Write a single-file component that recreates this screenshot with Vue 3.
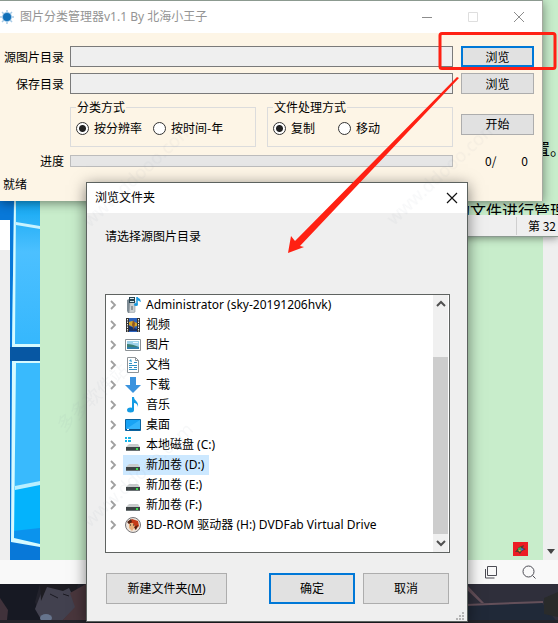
<script setup>
import { ref } from 'vue'

const source = ref('')
const target = ref('')
const sortMode = ref('resolution')
const fileMode = ref('copy')
const selected = ref('d')

const nodes = [
  { id: 'admin', icon: 'user', label: 'Administrator (sky-20191206hvk)' },
  { id: 'video', icon: 'video', label: '视频' },
  { id: 'picture', icon: 'picture', label: '图片' },
  { id: 'doc', icon: 'doc', label: '文档' },
  { id: 'download', icon: 'download', label: '下载' },
  { id: 'music', icon: 'music', label: '音乐' },
  { id: 'desktop', icon: 'desktop', label: '桌面' },
  { id: 'c', icon: 'system', label: '本地磁盘 (C:)' },
  { id: 'd', icon: 'disk', label: '新加卷 (D:)' },
  { id: 'e', icon: 'disk', label: '新加卷 (E:)' },
  { id: 'f', icon: 'disk', label: '新加卷 (F:)' },
  { id: 'h', icon: 'bd', label: 'BD-ROM 驱动器 (H:) DVDFab Virtual Drive' }
]
</script>

<template>
  <div class="screen">
    <svg class="night" viewBox="0 0 558 39" preserveAspectRatio="none" aria-hidden="true">
      <rect width="558" height="39" fill="#22222c" />
      <path d="M0 0h40l-5 18 7 19H0z" fill="#171923" />
      <path d="M44 2l18-2 18 8-2 14-16 15H42l-7-12z" fill="#42414f" />
      <path d="M40 0h38l-4 14-5-10-6 3-16-4-6 14z" fill="#1d1c22" />
      <path d="M70 9l16-9v39H60l15-16z" fill="#49363c" />
      <path d="M50 10l8 4M63 10l6 2" stroke="#1b1a22" stroke-width="1" />
      <ellipse cx="46" cy="34" rx="6" ry="4" fill="#66748d" />
      <path d="M0 14l8 12-1 10H0z" fill="#40323b" />
      <rect x="466" width="92" height="39" fill="#2f2f3b" />
      <path d="M466 21l76-2 16 20h-92z" fill="#202938" />
      <path d="M466 20l77-3v2l-77 3zM467 1l17 18h-3L466 5z" fill="#64505a" />
      <path d="M544 14l14-6v25l-14-3z" fill="#292b2b" />
      <rect y="36" width="558" height="3" fill="#24242a" />
    </svg>

    <div class="browser">
      <div class="page">
        <div class="preview"><i></i></div>
        <svg class="wallpaper" viewBox="0 0 30 359" preserveAspectRatio="none" aria-hidden="true">
          <defs>
            <linearGradient id="pane" x1="0" y1="0" x2="0" y2="1">
              <stop offset="0" stop-color="#13a8f2" />
              <stop offset=".35" stop-color="#4cc0ff" />
              <stop offset="1" stop-color="#35b7fd" />
            </linearGradient>
          </defs>
          <rect width="30" height="359" fill="#0878d8" />
          <path d="M4 0h26v146H2z" fill="url(#pane)" />
          <path d="M4 0h2l-1 143h25v3H2z" fill="#d6faff" />
          <path d="M6 21l24 4v3L6 24z" fill="#c9f3ff" />
          <rect y="146" width="30" height="14" fill="#0757a3" />
          <path d="M2 160h28v183L2 340z" fill="#39bafd" />
          <path d="M4 286l26-6v61L3 338z" fill="#04b3fc" />
          <path d="M3 330l27-3v17L3 339z" fill="#0b93ed" />
          <path d="M2 160h28v2H6l-2 175 26 6v3L1 341z" fill="#d6faff" />
          <path d="M5 285l25-5v4L5 289z" fill="#b9efff" />
        </svg>
        <div class="paper">
          <svg class="flag" viewBox="0 0 15 14" aria-hidden="true">
            <rect width="15" height="14" fill="#ed1c24" />
            <path d="M2 10l4-5 5-2-1 3 3 1-4 2-2 3-2-2z" fill="#5d3b2c" />
            <path d="M5 6l3-1v3H5z" fill="#3aa757" /><path d="M8 6l3 1-3 2z" fill="#3d73d8" /><path d="M5 8l3 0-1 2z" fill="#e8b729" />
          </svg>
        </div>
        <div class="gutter"><i></i></div>
      </div>
      <div class="toolbar">
        <svg width="14" height="14" viewBox="0 0 14 14" fill="none" stroke="#4d4d55" aria-hidden="true"><path d="M3.500 1.500h9v9h-9zM1.500 4v9h9" /></svg>
        <svg width="14" height="14" viewBox="0 0 14 14" fill="none" stroke="#4d4d55" aria-hidden="true"><circle cx="6.500" cy="6.500" r="5.500" /><path d="M10.500 10.500l3 3" /></svg>
      </div>
    </div>

    <div class="editor">
      <p class="line far">置。</p>
      <p class="line near">的文件进行管理</p>
      <div class="status"><span>第 32</span></div>
    </div>

    <main class="window">
      <header class="titlebar">
        <svg class="logo" width="14" height="16" viewBox="0 0 14 16" aria-hidden="true">
          <path d="M7 1v14M0 8h14M2 3l10 10M12 3L2 13" stroke="#a9cbe6" stroke-width="1.500" />
          <circle cx="7" cy="8" r="5" fill="#9cc5e6" /><circle cx="7" cy="8" r="4" fill="#0f6fb8" />
        </svg>
        <h1>图片分类管理器v1.1 By 北海小王子</h1>
        <div class="controls">
          <button type="button" aria-label="最小化"><svg width="12" height="12" viewBox="0 0 12 12"><path d="M1 6.500h10" stroke="#8c8c8c" /></svg></button>
          <button type="button" aria-label="最大化" disabled><svg width="12" height="12" viewBox="0 0 12 12"><path d="M1.500 1.500h9v9h-9z" fill="none" stroke="#dedede" /></svg></button>
          <button type="button" aria-label="关闭"><svg width="12" height="12" viewBox="0 0 12 12"><path d="M1 1l10 10M11 1L1 11" stroke="#8c8c8c" /></svg></button>
        </div>
      </header>

      <form class="form" @submit.prevent>
        <label for="source">源图片目录</label>
        <input id="source" v-model="source" class="field" type="text" />
        <button type="button" class="btn primary">浏览</button>

        <label for="target">保存目录</label>
        <input id="target" v-model="target" class="field" type="text" />
        <button type="button" class="btn">浏览</button>

        <div class="groups">
          <fieldset>
            <legend>分类方式</legend>
            <label class="radio"><input v-model="sortMode" type="radio" name="sort" value="resolution" />按分辨率</label>
            <label class="radio"><input v-model="sortMode" type="radio" name="sort" value="year" />按时间-年</label>
          </fieldset>
          <fieldset class="loose">
            <legend>文件处理方式</legend>
            <label class="radio"><input v-model="fileMode" type="radio" name="file" value="copy" />复制</label>
            <label class="radio"><input v-model="fileMode" type="radio" name="file" value="move" />移动</label>
          </fieldset>
        </div>
        <button type="submit" class="btn start">开始</button>

        <label class="tail" for="progress">进度</label>
        <progress id="progress" class="tail" value="0" max="100"></progress>
        <div class="count tail"><span>0/</span><span>0</span></div>
      </form>
      <footer>就绪</footer>
    </main>

    <section class="dialog" role="dialog" aria-labelledby="dialog-title">
      <header class="dialog-title">
        <h2 id="dialog-title">浏览文件夹</h2>
        <button type="button" aria-label="关闭"><svg width="12" height="12" viewBox="0 0 12 12"><path d="M1 1l10 10M11 1L1 11" stroke="#111" stroke-width="1.200" /></svg></button>
      </header>
      <div class="dialog-body">
        <p>请选择源图片目录</p>
        <div class="tree">
          <ul>
            <li v-for="n in nodes" :key="n.id">
              <button type="button" class="toggle" :aria-label="n.label">
                <svg width="8" height="10" viewBox="0 0 8 10"><path d="M2 1l4 4-4 4" fill="none" stroke="#a0a0a0" stroke-width="1.800" /></svg>
              </button>
              <button type="button" class="node" :class="{ on: n.id === selected }" @click="selected = n.id">
                <svg width="16" height="16" viewBox="0 0 16 16" aria-hidden="true">
                  <g v-if="n.icon === 'user'">
                    <path d="M2 3l4-2v15H3L2 14z" fill="#7e8b94" /><path d="M5 4h5v11l-2 1H4z" fill="#c9ced1" stroke="#8b949a" stroke-width=".6" />
                    <path d="M4 0h6v6H4z" fill="#27414e" /><path d="M5 1h4v1H5zM5 4h4v1H5z" fill="#d6e7ec" />
                    <path d="M12 0v7" stroke="#1697dc" stroke-width="1.500" /><path d="M12 0l3 2 1 3-4-2z" fill="#1697dc" /><ellipse cx="11" cy="7.500" rx="2" ry="1.500" fill="#1697dc" />
                    <path d="M7 9v4" stroke="#596167" />
                  </g>
                  <g v-else-if="n.icon === 'video'">
                    <path d="M1 1h14v14H1z" fill="#333" /><path d="M4 1h8v14H4z" fill="#2b62bd" />
                    <path d="M4 5l3-1 5 2v3l-4 1-4-2z" fill="#d7a529" /><path d="M4 9l8 3v2H4z" fill="#172f67" /><path d="M8 3l2 3-1 7-2-5z" fill="#8f5622" />
                    <path d="M2.500 2v13M13.500 2v13" stroke="#eee" stroke-dasharray="1.500 1" />
                  </g>
                  <g v-else-if="n.icon === 'picture'">
                    <path d="M.5 2.500h15v11H.5z" fill="#fff" stroke="#8b9195" /><path d="M2 4h12v8H2z" fill="#9ed1ea" />
                    <path d="M2 7c4 0 7 1 12 3v2H2z" fill="#3b7f76" /><path d="M2 10h12v2H2z" fill="#2f7eab" /><path d="M8 5h5v1H8z" fill="#e9f7fc" />
                  </g>
                  <g v-else-if="n.icon === 'doc'">
                    <path d="M2.500.5h8l3 3v12h-11z" fill="#fff" stroke="#8e9498" /><path d="M10.500.5v3h3" fill="none" stroke="#8e9498" />
                    <path d="M4 6.500h3M9 5.500h3M4 8.500h8M4 10.500h3M9 10.500h3M4 12.500h8" stroke="#2f90c4" /><path d="M4 4l2-2 1 3z" fill="#37a0d4" />
                  </g>
                  <path v-else-if="n.icon === 'download'" d="M5 0h6v8h5l-8 8-8-8h5z" fill="#3b93de" />
                  <g v-else-if="n.icon === 'music'" fill="#139be4">
                    <path d="M7 0h2c0 4 5 4 4 10-.5-3-2-4-4-4v7H7z" /><ellipse cx="5.500" cy="13" rx="3.500" ry="2.500" />
                  </g>
                  <g v-else-if="n.icon === 'desktop'">
                    <path d="M.5 2.500h15v11H.5z" fill="#18a2f4" stroke="#0b639e" /><path d="M1 12l14-9v10H1z" fill="#35b4fb" /><path d="M1 12h14v1H1z" fill="#0a4e86" /><path d="M2 12h2v1H2z" fill="#fff" />
                  </g>
                  <g v-else-if="n.icon === 'bd'">
                    <circle cx="8" cy="8" r="7.500" fill="#eee5dc" stroke="#77777b" /><path d="M3 5l4-3 6 2 1 5-4 4-1-5-4 1z" fill="#c43b18" />
                    <path d="M4 6l4 0 2 4-3 4-3-3z" fill="#e8b07c" /><path d="M2 5l4-3 1 3-3 2zM9 10l4-2-2 5z" fill="#512314" /><path d="M5 8h1M8 8h1" stroke="#222" />
                  </g>
                  <g v-else>
                    <g v-if="n.icon === 'system'" fill="#16b4e8"><path d="M0 0h2v2H0zM3 0h3v2H3zM0 3h2v2H0zM3 3h3v2H3z" /></g>
                    <path d="M4 7h9l2 3H1z" fill="#c9cccd" /><path d="M1 10h14v4H1z" fill="#3d4345" /><path d="M1 13h14v1H1z" fill="#6c7375" /><path d="M11 11h2v2h-2z" fill="#39e04d" />
                  </g>
                </svg>
                <span>{{ n.label }}</span>
              </button>
            </li>
          </ul>
          <div class="scroll" aria-hidden="true">
            <svg width="15" height="18" viewBox="0 0 15 18"><path d="M4 11l4-4 4 4" fill="none" stroke="#505050" stroke-width="2" /></svg>
            <div class="track"><div class="thumb"></div></div>
            <svg width="15" height="18" viewBox="0 0 15 18"><path d="M4 7l4 4 4-4" fill="none" stroke="#505050" stroke-width="2" /></svg>
          </div>
        </div>
        <div class="actions">
          <button type="button" class="btn make">新建文件夹(<u>M</u>)</button>
          <button type="button" class="btn primary">确定</button>
          <button type="button" class="btn">取消</button>
        </div>
      </div>
      <svg class="grip" width="8" height="8" viewBox="0 0 8 8" fill="#b5b5b5" aria-hidden="true"><path d="M6 0h2v2H6zM3 3h2v2H3zM6 3h2v2H6zM0 6h2v2H0zM3 6h2v2H3zM6 6h2v2H6z" /></svg>
    </section>

    <svg class="marks" width="558" height="623" viewBox="0 0 558 623" aria-hidden="true">
      <g class="water">
        <text transform="translate(394 226) rotate(-43)">www.ddooo.com</text>
        <text transform="translate(64 433) rotate(-43)">多多软件站</text>
        <text transform="translate(90 228) rotate(-43)">www.ddooo.com</text>
        <text transform="translate(90 528) rotate(-43)">www.ddooo.com</text>
      </g>
      <rect x="440" y="33.500" width="115" height="35" rx="2" fill="none" stroke="#ff2113" stroke-width="3" />
      <path d="M288 253l3-17 4 5L457 77l2 1L300 246l4 1z" fill="#ff2113" />
    </svg>
  </div>
</template>

<style>
body {
  margin: 0;
}
</style>

<style scoped>
* {
  box-sizing: border-box;
}
.screen {
  position: relative;
  min-height: 100vh;
  overflow: hidden;
  background: #22222c;
  color: #000;
  font: 12px/14px 'Noto Sans CJK SC', sans-serif;
}
button,
input {
  font: inherit;
  color: inherit;
}
h1,
h2,
p,
ul {
  margin: 0;
  padding: 0;
  font-weight: normal;
}
svg {
  display: block;
}
.night {
  position: absolute;
  left: 0;
  bottom: 0;
  width: 100%;
  height: 39px;
}
.browser {
  position: absolute;
  inset: 0 0 39px 0;
  display: flex;
  flex-direction: column;
  background: #c8edcb;
}
.page {
  flex: 1;
  display: flex;
  padding-top: 201px;
}
.preview {
  width: 10px;
  padding-top: 19px;
  background: linear-gradient(#0878d8 19px, #efefef 19px);
}
.preview i {
  display: block;
  height: 30px;
  background: #fff;
}
.wallpaper {
  width: 30px;
  height: 100%;
}
.paper {
  flex: 1;
  display: flex;
  align-items: flex-end;
  justify-content: flex-end;
  padding: 4px 15px;
}
.flag {
  width: 15px;
  height: 14px;
}
.gutter {
  width: 15px;
  display: flex;
  align-items: flex-end;
  justify-content: center;
  padding-bottom: 6px;
  background: #efefef;
}
.gutter i {
  border: 4px solid transparent;
  border-top: 5px solid #444;
  border-bottom: 0;
}
.toolbar {
  height: 24px;
  display: flex;
  align-items: center;
  justify-content: flex-end;
  gap: 24px;
  padding-right: 22px;
  background: #f9f9f9;
}
.editor {
  position: absolute;
  inset: 0 0 auto auto;
  width: 140px;
  padding-top: 138px;
  background: #c8edcb;
  box-shadow: 0 1px 8px rgba(0, 0, 0, 0.45);
}
.line {
  height: 21px;
  font-size: 16px;
  line-height: 21px;
  white-space: nowrap;
  overflow: hidden;
}
.far {
  padding-left: 116px;
}
.near {
  height: 14px;
  margin-top: 42px;
  padding-left: 36px;
  line-height: 18px;
}
.status {
  height: 22px;
  display: flex;
  align-items: center;
  justify-content: flex-end;
  background: #efefef;
  border-bottom: 1px solid #8b9a90;
}
.status span {
  width: 42px;
  padding-left: 11px;
  border-left: 1px solid #cfcfcf;
  line-height: 18px;
  white-space: nowrap;
}
.window {
  position: absolute;
  inset: 0 15px auto 0;
  background: #fdf5e6;
  border-top: 1px solid #8c9a90;
  border-right: 1px solid #a5aaa0;
  box-shadow: 0 2px 10px rgba(0, 0, 0, 0.45);
}
.titlebar {
  height: 32px;
  display: flex;
  align-items: center;
  gap: 6px;
  background: #fff;
}
.titlebar h1 {
  flex: 1;
  font: 12px/16px 'Noto Sans', 'Noto Sans CJK SC', sans-serif;
  color: #949494;
}
.controls {
  display: flex;
}
.controls button,
.dialog-title button {
  display: grid;
  place-items: center;
  width: 46px;
  height: 31px;
  padding: 0;
  border: 0;
  background: none;
}
.form {
  display: grid;
  grid-template-columns: 64px 1fr 73px;
  column-gap: 8px;
  row-gap: 6px;
  align-items: center;
  padding: 13px 8px 0 0;
}
.form > label {
  text-align: right;
}
.field,
.groups,
progress {
  margin-left: -2px;
}
.field {
  width: calc(100% + 2px);
  height: 21px;
  padding: 0 4px;
  border: 1px solid #7a7a7a;
  border-radius: 0;
  background: #efefef;
}
.btn {
  height: 21px;
  padding: 0;
  border: 1px solid #adadad;
  background: #e1e1e1;
  line-height: 16px;
}
.primary {
  border: 2px solid #0078d7;
}
.groups {
  grid-column: 2;
  display: flex;
  gap: 11px;
}
fieldset {
  flex: 1;
  min-width: 0;
  height: 47px;
  display: flex;
  align-items: center;
  gap: 11px;
  margin: 0;
  padding: 0 5px 4px;
  border: 1px solid #dcdcdc;
}
.loose {
  gap: 23px;
}
legend {
  height: 14px;
  padding: 0 1px;
}
.radio {
  display: flex;
  align-items: center;
  gap: 5px;
}
.radio input {
  appearance: none;
  width: 13px;
  height: 13px;
  margin: 0;
  border: 1px solid #333;
  border-radius: 50%;
  background: #fff;
}
.radio input:checked {
  background: radial-gradient(circle, #222 3px, #fff 4px);
}
.start {
  margin-top: 1px;
}
.form .tail {
  margin-top: 1px;
}
progress {
  appearance: none;
  width: calc(100% + 2px);
  height: 12px;
  border: 1px solid #bcbcbc;
  background: #e6e6e6;
}
progress::-webkit-progress-bar {
  background: #e6e6e6;
}
.count {
  height: 12px;
  display: flex;
  justify-content: space-between;
  padding: 0 6px 0 24px;
  line-height: 12px;
}
footer {
  padding: 9px 3px 10px;
}
.dialog {
  position: absolute;
  inset: 182px 90px auto 86px;
  background: #efefef;
  border: 1px solid #5c625f;
  box-shadow: 0 3px 14px rgba(0, 0, 0, 0.5);
  font-family: 'Noto Sans', 'Noto Sans CJK SC', sans-serif;
}
.dialog-title {
  height: 30px;
  display: flex;
  align-items: center;
  justify-content: space-between;
  padding-left: 8px;
  background: #fff;
}
.dialog-title h2 {
  font-size: 12px;
}
.dialog-title button {
  width: 30px;
}
.dialog-body {
  padding: 16px 17px 17px 18px;
}
.dialog-body p {
  line-height: 16px;
}
.tree {
  display: flex;
  margin-top: 49px;
  padding-right: 1px;
  border: 1px solid #5f6361;
  background: #fff;
}
.tree ul {
  flex: 1;
  min-width: 0;
  padding-bottom: 17px;
  list-style: none;
}
.tree li {
  height: 20px;
  display: flex;
  align-items: center;
}
.toggle {
  width: 17px;
  height: 20px;
  padding: 0 3px;
  border: 0;
  background: none;
}
.node {
  height: 20px;
  display: flex;
  align-items: center;
  gap: 5px;
  padding: 0 5px 0 2px;
  border: 0;
  background: none;
  white-space: nowrap;
}
.on {
  background: #cce8ff;
}
.scroll {
  display: flex;
  flex-direction: column;
  width: 15px;
  background: #f0f0f0;
}
.track {
  flex: 1;
  padding-top: 44px;
}
.thumb {
  height: 100%;
  background: #cdcdcd;
}
.actions {
  display: flex;
  gap: 8px;
  margin-top: 20px;
  padding: 0 1px;
}
.actions .btn {
  width: 86px;
  height: 31px;
}
.actions .make {
  width: 121px;
  margin-right: auto;
}
.grip {
  position: absolute;
  right: 3px;
  bottom: 1px;
}
.marks {
  position: absolute;
  inset: 0 auto auto 0;
  pointer-events: none;
}
.water {
  fill: #8c98a8;
  opacity: 0.07;
  font: 18px 'Noto Sans', 'Noto Sans CJK SC', sans-serif;
}
</style>
